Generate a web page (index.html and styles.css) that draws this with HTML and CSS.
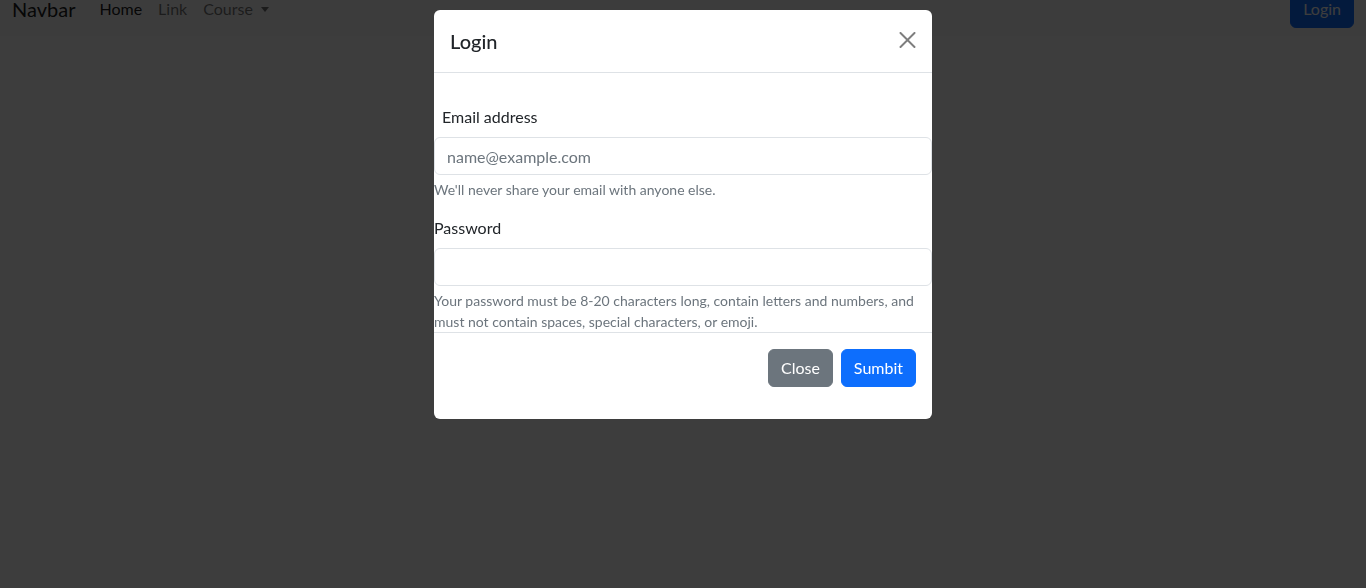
FILE: index.html
```html
<!DOCTYPE html>
<html lang="en">
<head>
<meta charset="utf-8">
<title>Login modal</title>
<link rel="stylesheet" href="styles.css">
</head>
<body>
<nav class="navbar">
  <a class="brand" href="#">Navbar</a>
  <ul class="nav-links">
    <li><a class="nav-link active" href="#">Home</a></li>
    <li><a class="nav-link" href="#">Link</a></li>
    <li><a class="nav-link dropdown" href="#">Course <span class="caret"></span></a></li>
  </ul>
  <button class="btn btn-primary nav-login" type="button">Login</button>
</nav>

<div class="backdrop"></div>

<div class="modal">
  <div class="modal-dialog">
    <div class="modal-header">
      <h5 class="modal-title">Login</h5>
      <button class="btn-close" type="button" aria-label="Close">
        <svg viewBox="0 0 16 16" width="16" height="16"><path d="M.293.293a1 1 0 0 1 1.414 0L8 6.586 14.293.293a1 1 0 1 1 1.414 1.414L9.414 8l6.293 6.293a1 1 0 0 1-1.414 1.414L8 9.414l-6.293 6.293a1 1 0 0 1-1.414-1.414L6.586 8 .293 1.707a1 1 0 0 1 0-1.414z"/></svg>
      </button>
    </div>
    <div class="modal-body">
      <div class="field field-email">
        <label class="form-label label-indent" for="email">Email address</label>
        <input class="form-control" id="email" type="email" placeholder="name@example.com">
        <div class="form-text">We'll never share your email with anyone else.</div>
      </div>
      <div class="field">
        <label class="form-label" for="pw">Password</label>
        <input class="form-control" id="pw" type="password">
        <div class="form-text">Your password must be 8-20 characters long, contain letters and numbers, and must not contain spaces, special characters, or emoji.</div>
      </div>
    </div>
    <div class="modal-footer">
      <button class="btn btn-secondary" type="button">Close</button>
      <button class="btn btn-primary" type="button">Sumbit</button>
    </div>
  </div>
</div>
</body>
</html>
```

FILE: styles.css
```css
* { box-sizing: border-box; }

html, body {
  margin: 0;
  height: 100%;
}

body {
  background: #ffffff;
  color: #212529;
  font-family: Lato, "Noto Sans", "Liberation Sans", sans-serif;
  font-size: 16px;
  line-height: 1.5;
  overflow: hidden;
}

/* Navbar */
.navbar {
  display: flex;
  align-items: center;
  height: 54px;
  margin-top: -18px;
  padding: 8px 12px;
  background: #f8f9fa;
}

.brand {
  font-size: 20px;
  line-height: 30px;
  color: rgba(0, 0, 0, 0.9);
  text-decoration: none;
  margin-right: 16px;
}

.nav-links {
  display: flex;
  list-style: none;
  margin: 0;
  padding: 0;
  flex: 1;
}

.nav-link {
  display: block;
  padding: 8px;
  color: rgba(0, 0, 0, 0.55);
  text-decoration: none;
}

.nav-link.active { color: rgba(0, 0, 0, 0.9); }

.caret {
  display: inline-block;
  margin-left: 4px;
  vertical-align: 3px;
  border-top: 5px solid currentColor;
  border-left: 4px solid transparent;
  border-right: 4px solid transparent;
}

/* Buttons */
.btn {
  font-family: inherit;
  font-size: 16px;
  line-height: 24px;
  padding: 6px 12px;
  border: 1px solid transparent;
  border-radius: 6px;
  color: #ffffff;
  cursor: pointer;
}

.btn-primary { background: #0d6efd; border-color: #0d6efd; }
.btn-secondary { background: #6c757d; border-color: #6c757d; }

/* Backdrop */
.backdrop {
  position: fixed;
  inset: 0;
  background: rgba(0, 0, 0, 0.76);
}

/* Modal */
.modal {
  position: fixed;
  inset: 0;
}

.modal-dialog {
  width: 498px;
  margin: 10px auto 0;
  background: #ffffff;
  border-radius: 6px;
  overflow: hidden;
}

.modal-header {
  display: flex;
  align-items: center;
  justify-content: space-between;
  height: 63px;
  padding: 16px;
  border-bottom: 1px solid #dee2e6;
}

.modal-title {
  margin: 0;
  font-size: 20px;
  font-weight: 500;
  line-height: 30px;
  color: #212529;
}

.btn-close {
  display: flex;
  padding: 0;
  margin-right: 0;
  margin-top: -2px;
  background: none;
  border: 0;
  opacity: 0.5;
  cursor: pointer;
}

.btn-close svg { fill: #000000; display: block; width: 17px; height: 16px; }

.modal-body {
  padding: 32px 0 0;
}

.field { margin-bottom: 16px; }
.field:last-child { margin-bottom: 0; }

.form-label {
  display: block;
  margin-bottom: 8px;
  line-height: 24px;
}

.label-indent { padding-left: 8px; }

.form-control {
  display: block;
  width: 100%;
  height: 38px;
  padding: 6px 12px;
  font-family: inherit;
  font-size: 16px;
  color: #212529;
  background: #ffffff;
  border: 1px solid #dee2e6;
  border-radius: 6px;
}

.form-control::placeholder { color: #6c757d; opacity: 1; }

.form-text {
  margin-top: 4px;
  font-size: 14px;
  line-height: 21px;
  color: #6c757d;
}

.modal-footer {
  display: flex;
  justify-content: flex-end;
  gap: 8px;
  padding: 16px 16px 32px;
  border-top: 1px solid #dee2e6;
}
```
